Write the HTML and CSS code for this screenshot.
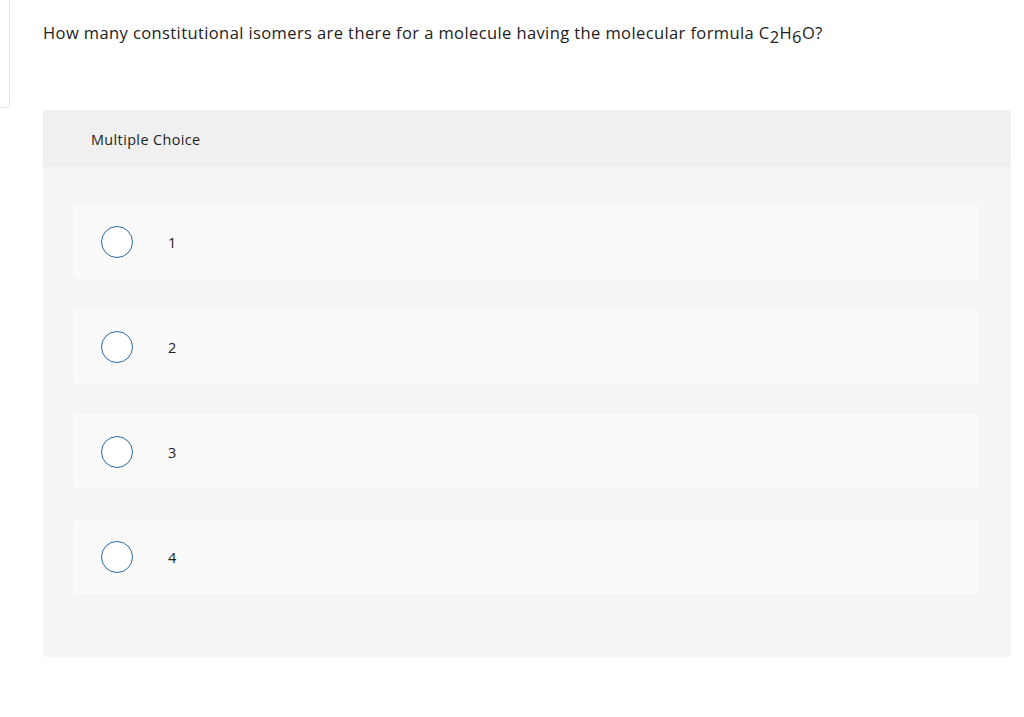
FILE: index.html
```html
<!DOCTYPE html>
<html>
<head>
<meta charset="utf-8">
<link rel="stylesheet" href="styles.css">
</head>
<body>
<div class="side-card"></div>
<main class="content">
  <p class="question">How many constitutional isomers are there for a molecule having the molecular formula C<sub>2</sub>H<sub>6</sub>O?</p>
  <section class="panel">
    <header class="panel-head">Multiple Choice</header>
    <div class="options">
      <label class="option"><span class="radio"></span><span class="opt-text">1</span></label>
      <label class="option"><span class="radio"></span><span class="opt-text">2</span></label>
      <label class="option"><span class="radio"></span><span class="opt-text">3</span></label>
      <label class="option"><span class="radio"></span><span class="opt-text">4</span></label>
    </div>
  </section>
</main>
</body>
</html>
```
FILE: styles.css
```css
html, body {
  margin: 0;
  padding: 0;
  background: #fff;
}
body {
  font-family: "Open Sans", "Liberation Sans", sans-serif;
  color: #222;
  position: relative;
  width: 1024px;
  height: 717px;
  overflow: hidden;
}
.side-card {
  position: absolute;
  left: -20px;
  top: -20px;
  width: 28px;
  height: 126px;
  border: 1px solid #e6e6e6;
  border-radius: 5px;
  background: #fff;
}
.content {
  padding: 20px 13px 0 43px;
}
.question {
  margin: 0;
  font-size: 16.5px;
  line-height: 26px;
  letter-spacing: 0.4px;
  color: #222;
}
.question sub {
  font-size: 16.5px;
  vertical-align: baseline;
  position: relative;
  top: 4px;
  line-height: 0;
}
.panel {
  margin-top: 64px;
  background: #f5f5f5;
  border-radius: 3px;
  padding-bottom: 63px;
  overflow: hidden;
}
.panel-head {
  height: 57px;
  background: #f0f0f0;
  display: flex;
  align-items: center;
  padding-left: 48px;
  font-size: 14.4px;
  letter-spacing: 0.4px;
  color: #222;
  padding-top: 1px;
  box-sizing: border-box;
}
.options {
  padding: 37px 32px 0 30px;
  display: flex;
  flex-direction: column;
  gap: 30px;
}
.option {
  height: 75px;
  background: #fafafa;
  border-radius: 4px;
  display: flex;
  align-items: center;
  padding-left: 28px;
}
.radio {
  width: 30px;
  height: 30px;
  border: 1.6px solid #2c6aa3;
  border-radius: 50%;
  background: #fff;
  flex: none;
}
.opt-text {
  margin-left: 35px;
  font-size: 14.5px;
  color: #222;
  padding-top: 1px;
}
```
